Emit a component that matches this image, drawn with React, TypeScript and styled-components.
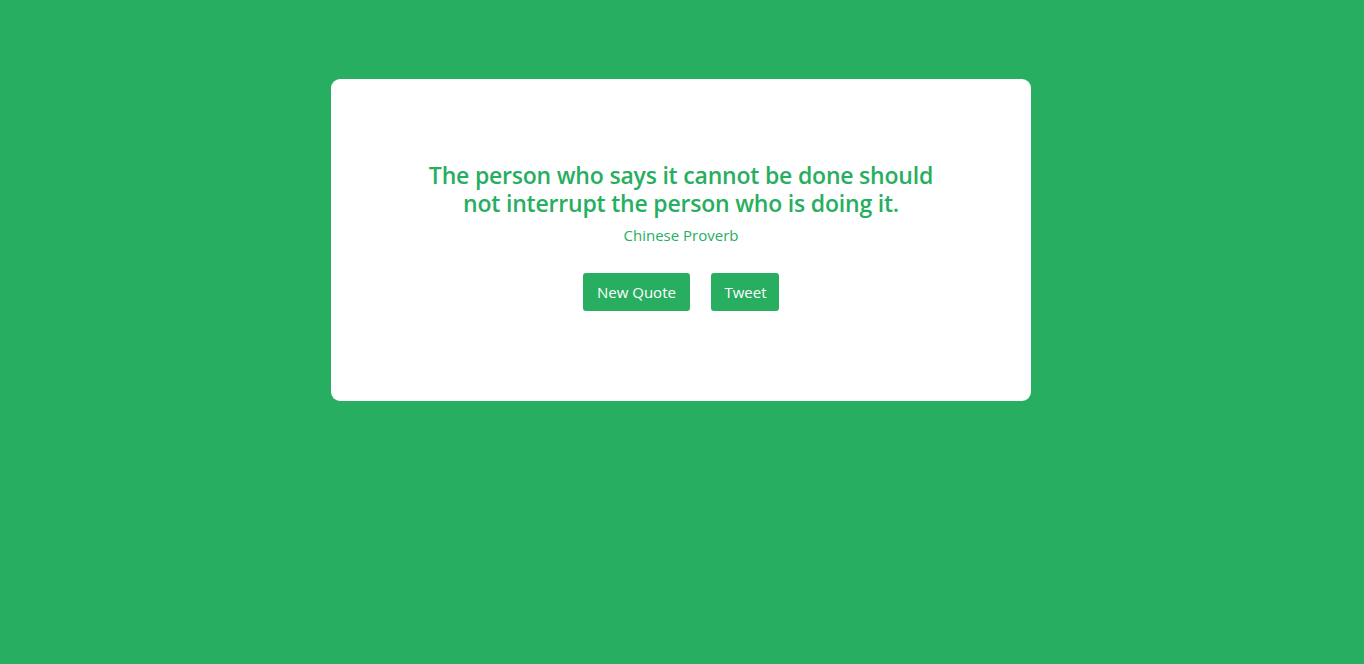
import React from "react";
import styled, { createGlobalStyle } from "styled-components";

const Global = createGlobalStyle`
  html, body { margin: 0; padding: 0; }
  body {
    background: #27ae60;
    font-family: "Open Sans", "Noto Sans", sans-serif;
    min-height: 664px;
  }
`;

const Page = styled.div`
  display: flex;
  justify-content: center;
  padding-top: 79px;
  padding-right: 2px;
`;

const Card = styled.div`
  width: 700px;
  height: 322px;
  box-sizing: border-box;
  background: #fff;
  border-radius: 9px;
  display: flex;
  flex-direction: column;
  align-items: center;
  padding-top: 82px;
`;

const Quote = styled.h1`
  margin: 0;
  width: 530px;
  text-align: center;
  color: #27ae60;
  font-size: 23px;
  font-weight: 600;
  line-height: 28px;
  letter-spacing: -0.2px;
`;

const Author = styled.div`
  margin-top: 8px;
  color: #27ae60;
  font-size: 15px;
  line-height: 20px;
`;

const Buttons = styled.div`
  display: flex;
  gap: 21px;
  margin-top: 28px;
`;

const Button = styled.button<{ $wide?: boolean }>`
  background: #27ae60;
  color: #fff;
  border: none;
  border-radius: 3px;
  height: 38px;
  padding: 0 ${(p) => (p.$wide ? "14.5px" : "13px")};
  font-family: inherit;
  font-size: 15px;
  cursor: pointer;
`;

export default function App() {
  return (
    <>
      <Global />
      <Page>
        <Card>
          <Quote>
            The person who says it cannot be done should not interrupt the person who is doing it.
          </Quote>
          <Author>Chinese Proverb</Author>
          <Buttons>
            <Button $wide>New Quote</Button>
            <Button>Tweet</Button>
          </Buttons>
        </Card>
      </Page>
    </>
  );
}
